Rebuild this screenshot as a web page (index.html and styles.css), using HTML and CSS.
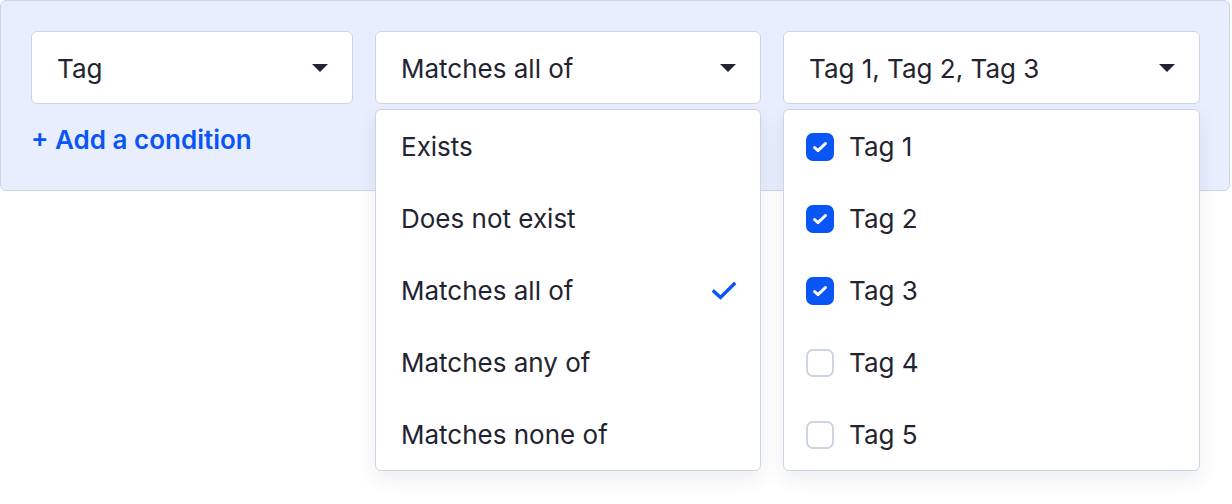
FILE: index.html
```html
<!DOCTYPE html>
<html lang="en">
<head>
    <meta charset="UTF-8">
    <title>Conditions</title>
    <link rel="stylesheet" href="styles.css">
</head>
<body>
    <div class="filter-panel">
        <div class="field field-key">
            <div class="select">
                <span>Tag</span>
                <span class="caret"></span>
            </div>
            <a class="add-condition" href="#">+ Add a condition</a>
        </div>

        <div class="field field-op">
            <div class="select">
                <span>Matches all of</span>
                <span class="caret"></span>
            </div>
            <ul class="menu">
                <li class="menu-item">Exists</li>
                <li class="menu-item">Does not exist</li>
                <li class="menu-item selected">Matches all of
                    <svg class="tick" width="24" height="18" viewBox="0 0 24 18"><path d="M2 9.5l6.5 6L22 2" fill="none" stroke="#0a55f5" stroke-width="3.4" stroke-linecap="square"/></svg>
                </li>
                <li class="menu-item">Matches any of</li>
                <li class="menu-item">Matches none of</li>
            </ul>
        </div>

        <div class="field field-value">
            <div class="select">
                <span>Tag 1, Tag 2, Tag 3</span>
                <span class="caret"></span>
            </div>
            <ul class="menu">
                <li class="menu-item"><span class="box checked"><svg width="16" height="12" viewBox="0 0 16 12"><path d="M2.5 6.5l3.5 3.2L13.5 2.5" fill="none" stroke="#fff" stroke-width="3" stroke-linecap="round" stroke-linejoin="round"/></svg></span>Tag 1</li>
                <li class="menu-item"><span class="box checked"><svg width="16" height="12" viewBox="0 0 16 12"><path d="M2.5 6.5l3.5 3.2L13.5 2.5" fill="none" stroke="#fff" stroke-width="3" stroke-linecap="round" stroke-linejoin="round"/></svg></span>Tag 2</li>
                <li class="menu-item"><span class="box checked"><svg width="16" height="12" viewBox="0 0 16 12"><path d="M2.5 6.5l3.5 3.2L13.5 2.5" fill="none" stroke="#fff" stroke-width="3" stroke-linecap="round" stroke-linejoin="round"/></svg></span>Tag 3</li>
                <li class="menu-item"><span class="box"></span>Tag 4</li>
                <li class="menu-item"><span class="box"></span>Tag 5</li>
            </ul>
        </div>
    </div>
</body>
</html>
```

FILE: styles.css
```css
html, body {
    min-height: 504px;
}
body {
    margin: 0;
    background: #fff;
    font-family: Inter, "Noto Sans", sans-serif;
    color: #1f2430;
}
.filter-panel {
    display: flex;
    gap: 22px;
    width: 1230px;
    box-sizing: border-box;
    padding: 30px 29px 35px 30px;
    background: #e8eefd;
    border: 1px solid #cdd4e2;
    border-radius: 6px;
}
.field {
    position: relative;
    flex: none;
}
.field-key {
    width: 322px;
}
.field-op {
    width: 386px;
}
.field-value {
    width: 417px;
}
.select {
    display: flex;
    align-items: center;
    justify-content: space-between;
    height: 73px;
    box-sizing: border-box;
    padding: 1px 24px 0 25px;
    background: #fff;
    border: 1px solid #cdd4e2;
    border-radius: 6px;
    font-size: 26px;
}
.caret {
    width: 0;
    height: 0;
    border-left: 8px solid transparent;
    border-right: 8px solid transparent;
    border-top: 8px solid #1f2430;
}
.add-condition {
    display: block;
    margin-top: 21px;
    font-size: 26px;
    line-height: 30px;
    font-weight: 600;
    color: #0a55f5;
    text-decoration: none;
}
.menu {
    position: absolute;
    z-index: 2;
    top: 78px;
    left: 0;
    right: 0;
    margin: 0;
    padding: 0;
    list-style: none;
    background: #fff;
    border: 1px solid #cdd4e2;
    border-radius: 6px;
    box-shadow: 0 8px 20px rgba(30, 40, 60, 0.08);
}
.menu-item {
    display: flex;
    align-items: center;
    height: 72px;
    padding: 1px 24px 0 25px;
    box-sizing: border-box;
    font-size: 26px;
}
.menu-item.selected {
    justify-content: space-between;
}
.tick {
    margin-top: 0;
}
.box {
    display: flex;
    align-items: center;
    justify-content: center;
    width: 28px;
    height: 28px;
    box-sizing: border-box;
    margin: 0 15px 0 -3px;
    border: 2px solid #cdd4e2;
    border-radius: 7px;
}
.box.checked {
    background: #0a55f5;
    border-color: #0a55f5;
}
```
